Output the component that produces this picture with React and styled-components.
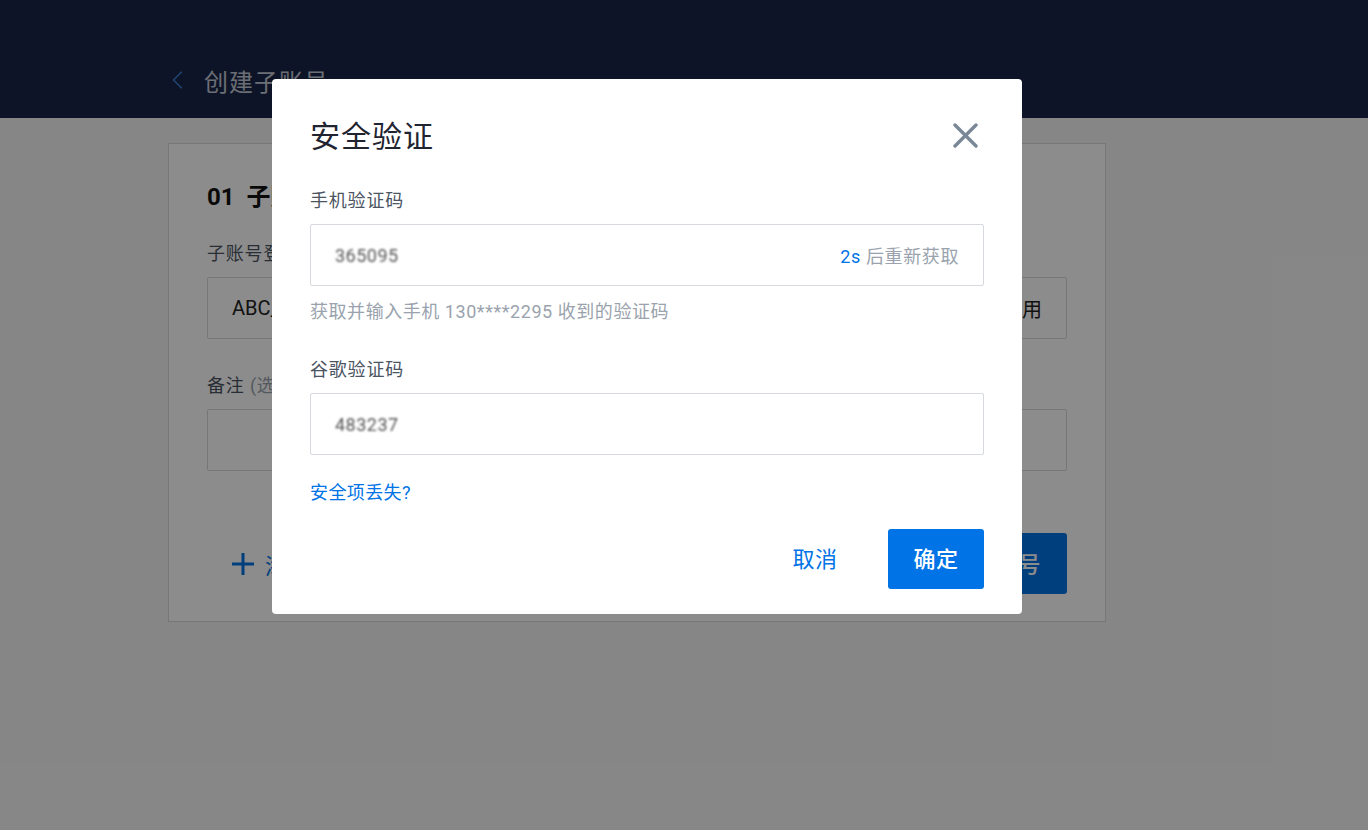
import React from 'react'
import styled, { createGlobalStyle } from 'styled-components'

const GlobalStyle = createGlobalStyle`
  html, body { margin: 0; padding: 0; }
  body {
    font-family: Roboto, "Noto Sans CJK SC", "Noto Sans", sans-serif;
    background: #f5f5f5;
  }
  * { box-sizing: border-box; }
`;

const Page = styled.div`
  position: relative;
  width: 100%;
  min-height: 830px;
  background: #f5f5f5;
  overflow: hidden;
`;

const TopBar = styled.header`
  height: 118px;
  background: #1a2647;
  padding-left: 168px;
  padding-top: 62px;
`;

const Back = styled.div`
  display: flex;
  align-items: center;
  gap: 14px;
  height: 36px;
  color: #c3c9d3;
  font-size: 24px;
  letter-spacing: 1px;
  svg { color: #3a7bd5; }
`;

const Content = styled.main`
  padding: 25px 0 0 168px;
`;

const Card = styled.section`
  width: 938px;
  background: #fff;
  border: 1px solid #d9d9d9;
  padding: 38px 38px 27px;
`;

const StepTitle = styled.h2`
  margin: 0;
  height: 30px;
  line-height: 30px;
  font-size: 24px;
  font-weight: 700;
  color: #111;
`;

const FieldLabel = styled.div`
  margin-top: ${({ $top }) => $top}px;
  line-height: 24px;
  font-size: 18px;
  letter-spacing: 0.8px;
  color: #4b5563;
  span { color: #9aa3ad; }
`;

const BigInput = styled.div`
  margin-top: 11px;
  height: 62px;
  border: 1px solid #d9d9d9;
  border-radius: 2px;
  display: flex;
  align-items: center;
  justify-content: space-between;
  padding: 0 24px;
  font-size: 20px;
  color: #222;
`;

const CardFooter = styled.div`
  margin-top: 62px;
  display: flex;
  align-items: center;
  justify-content: space-between;
`;

const AddLink = styled.div`
  display: flex;
  align-items: center;
  gap: 10px;
  padding-left: 24px;
  color: #0073e6;
  font-size: 22px;
`;

const SolidButton = styled.button`
  height: ${({ $h }) => $h || 60}px;
  padding: 0 ${({ $px }) => $px || 24}px 4px;
  min-width: 96px;
  border: none;
  border-radius: 3px;
  background: #0073e6;
  color: #fff;
  font-family: inherit;
  font-size: 22px;
  font-weight: 500;
  letter-spacing: 0.5px;
`;

const TextButton = styled.button`
  height: 60px;
  width: 96px;
  padding: 0 0 4px;
  border: none;
  background: transparent;
  color: #0073e6;
  font-family: inherit;
  font-size: 22px;
  letter-spacing: 0.5px;
`;

const Overlay = styled.div`
  position: absolute;
  inset: 0;
  background: rgba(0, 0, 0, 0.45);
  padding: 79px 0 0 272px;
`;

const Modal = styled.div`
  width: 750px;
  background: #fff;
  border-radius: 4px;
  padding: 38px 38px 25px;
`;

const ModalHead = styled.div`
  height: 36px;
  display: flex;
  align-items: center;
  justify-content: space-between;
`;

const ModalTitle = styled.h3`
  margin: 0;
  margin-top: -2px;
  font-size: 30px;
  font-weight: 400;
  letter-spacing: 1px;
  color: #1f2430;
`;

const Close = styled.button`
  border: none;
  background: transparent;
  padding: 0;
  margin-right: 6px;
  display: flex;
  color: #7a8797;
`;

const CodeInput = styled.div`
  margin-top: 11px;
  height: 62px;
  border: 1px solid #d6d9dd;
  border-radius: 2px;
  display: flex;
  align-items: center;
  justify-content: space-between;
  padding: 0 24px;
`;

const Blurred = styled.span`
  font-size: 18px;
  color: #555;
  letter-spacing: 0.5px;
  filter: blur(1.2px);
`;

const Countdown = styled.span`
  font-size: 18px;
  letter-spacing: 0.6px;
  color: #9aa3ad;
  b { color: #0073e6; font-weight: 400; }
`;

const Hint = styled.div`
  margin-top: 14px;
  line-height: 24px;
  font-size: 18px;
  letter-spacing: 0.55px;
  color: #9aa3ad;
`;

const Link = styled.a`
  display: block;
  margin-top: 26px;
  line-height: 24px;
  font-size: 18px;
  letter-spacing: 0.4px;
  color: #0073e6;
  text-decoration: none;
`;

const ModalFooter = styled.div`
  margin-top: 24px;
  display: flex;
  justify-content: flex-end;
  gap: 25px;
`;

export default function App() {
  return (
    <Page>
      <GlobalStyle />
      <TopBar>
        <Back>
          <svg width="22" height="22" viewBox="0 0 24 24" fill="none" stroke="currentColor" strokeWidth="1.6">
            <path d="M15 3 6 12l9 9" />
          </svg>
          创建子账号
        </Back>
      </TopBar>
      <Content>
        <Card>
          <StepTitle>01&nbsp; 子账号信息</StepTitle>
          <FieldLabel $top={30}>子账号登录名</FieldLabel>
          <BigInput>
            <span>ABC_test01</span>
            <span>可用</span>
          </BigInput>
          <FieldLabel $top={35}>备注 <span>(选填)</span></FieldLabel>
          <BigInput />
          <CardFooter>
            <AddLink>
              <svg width="24" height="24" viewBox="0 0 24 24" stroke="currentColor" strokeWidth="3">
                <path d="M12 1v22M1 12h22" />
              </svg>
              添加子账号
            </AddLink>
            <SolidButton $px={26} $h={61}>创建子账号</SolidButton>
          </CardFooter>
        </Card>
      </Content>

      <Overlay>
        <Modal>
          <ModalHead>
            <ModalTitle>安全验证</ModalTitle>
            <Close aria-label="close">
              <svg width="25" height="25" viewBox="0 0 25 25" stroke="currentColor" strokeWidth="3.4" strokeLinecap="round">
                <path d="M2 2l21 21M23 2 2 23" />
              </svg>
            </Close>
          </ModalHead>
          <FieldLabel $top={36}>手机验证码</FieldLabel>
          <CodeInput>
            <Blurred>365095</Blurred>
            <Countdown><b>2s</b> 后重新获取</Countdown>
          </CodeInput>
          <Hint>获取并输入手机 130****2295 收到的验证码</Hint>
          <FieldLabel $top={34}>谷歌验证码</FieldLabel>
          <CodeInput>
            <Blurred>483237</Blurred>
          </CodeInput>
          <Link href="#">安全项丢失?</Link>
          <ModalFooter>
            <TextButton>取消</TextButton>
            <SolidButton>确定</SolidButton>
          </ModalFooter>
        </Modal>
      </Overlay>
    </Page>
  );
}
